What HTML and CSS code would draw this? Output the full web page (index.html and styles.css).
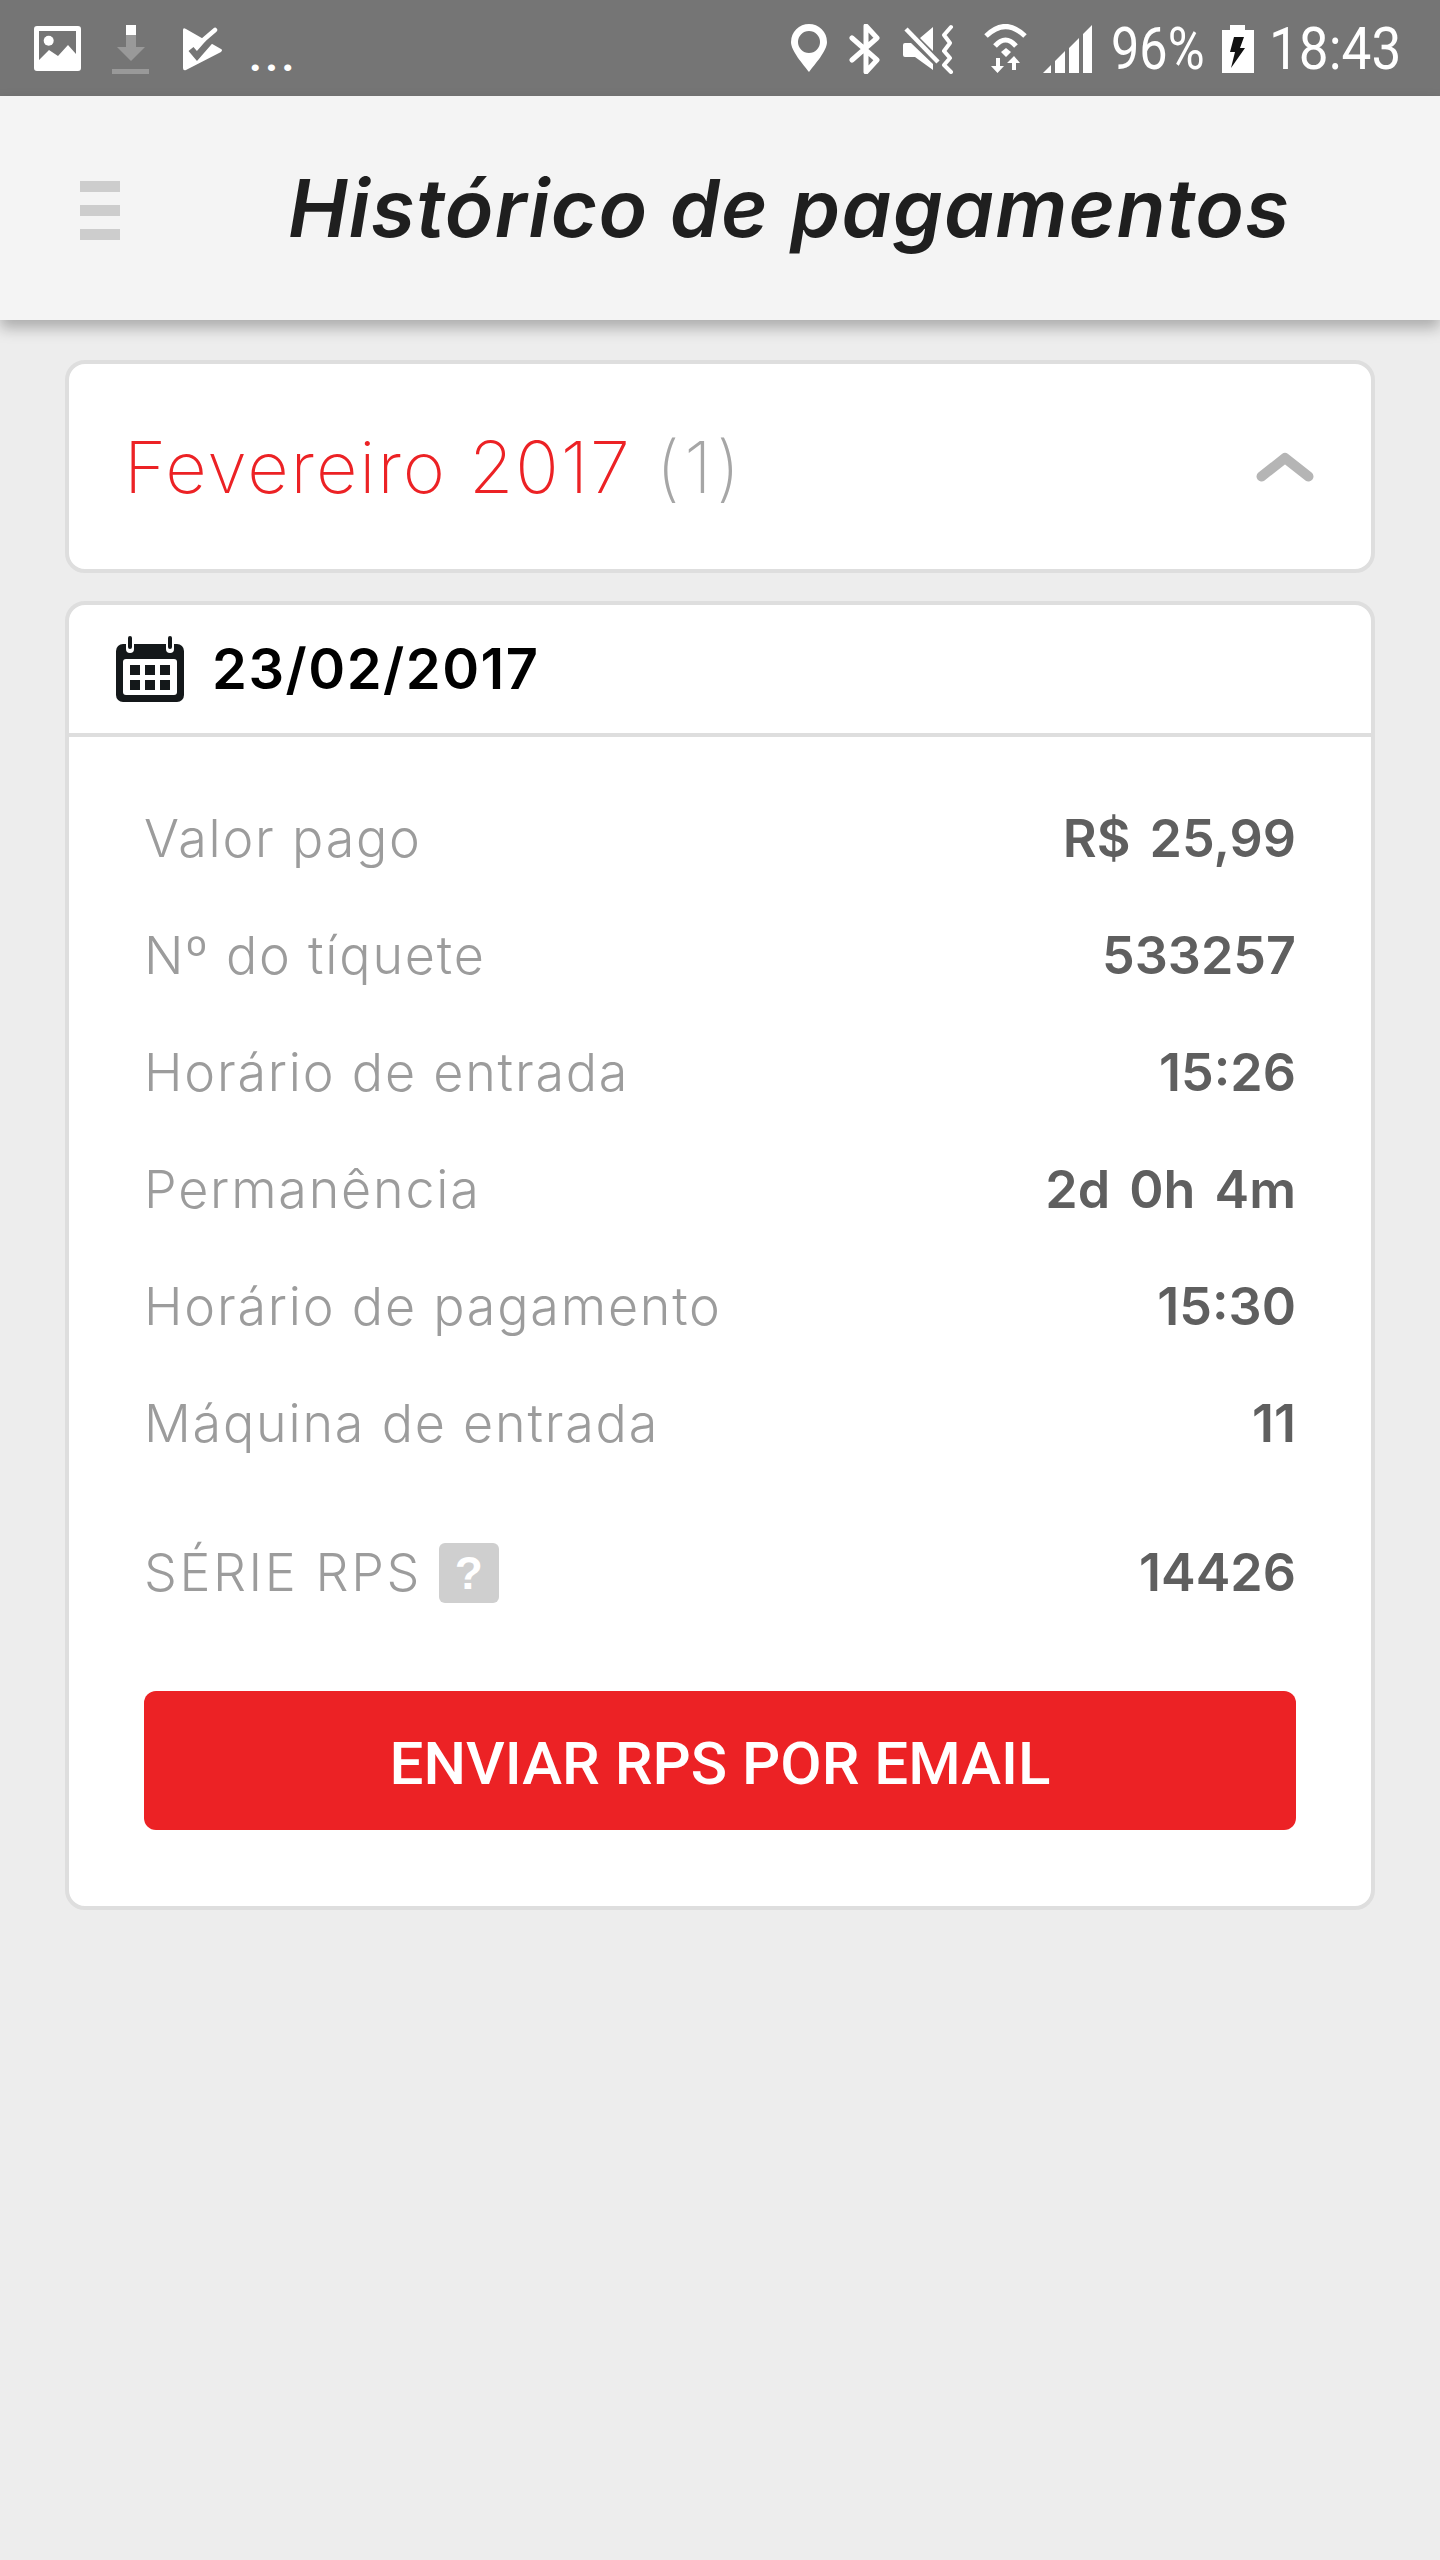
FILE: index.html
```html
<!DOCTYPE html>
<html lang="pt">
<head>
<meta charset="utf-8">
<title>Histórico de pagamentos</title>
<link rel="stylesheet" href="styles.css">
</head>
<body>
<div class="status">
  <div class="status-left">
    <svg class="i-image" width="47" height="45" viewBox="0 0 47 45"><path fill-rule="evenodd" fill="#fff" d="M3 0h41a3 3 0 0 1 3 3v39a3 3 0 0 1-3 3H3a3 3 0 0 1-3-3V3a3 3 0 0 1 3-3zM5 5v29l10-10 9 6 10-11 8 9V5z"/><circle cx="14.700" cy="14.700" r="5" fill="#fff"/></svg>
    <svg class="i-download" width="37" height="49" viewBox="0 0 37 49"><rect x="14" width="10" height="10" fill="#fff"/><path d="M14 10h10v12h9L19 36 5 22h9z" fill="#999"/><rect y="44" width="37" height="5" fill="#999"/></svg>
    <svg class="i-check" width="41" height="44" viewBox="0 0 41 44"><path fill="#fff" d="M0 3q0-3 3-1l35 20q2 1 0 3L3 43q-3 1-3-2z"/><path fill="none" stroke="#757575" stroke-width="6.500" d="M8 22l6 7 20-23"/><path fill="none" stroke="#fff" stroke-width="4.500" stroke-linecap="round" d="M18 15L32 3"/></svg>
    <span class="dots">...</span>
  </div>
  <div class="status-right">
    <svg class="i-pin" width="36" height="48" viewBox="0 0 36 48"><path fill-rule="evenodd" fill="#fff" d="M18 0a18 18 0 0 1 18 18c0 9-12 22-18 30C12 40 0 27 0 18A18 18 0 0 1 18 0zm0 7a11 11 0 1 0 0 22 11 11 0 0 0 0-22z"/></svg>
    <svg class="i-bt" width="31" height="50" viewBox="0 0 31 50"><path fill="none" stroke="#fff" stroke-width="5" stroke-linecap="round" stroke-linejoin="round" d="M3 14l25 22-11 12V2l11 12L3 36"/></svg>
    <svg class="i-mute" width="53" height="50" viewBox="0 0 53 50"><path fill="#fff" d="M18 14L31 3v24zM1 21q0-2 2-2h6l22 21v6L13 33H3q-2 0-2-2z"/><path stroke="#fff" stroke-width="4.500" d="M4 5l32 33"/><path fill="none" stroke="#fff" stroke-width="4" stroke-linejoin="round" stroke-linecap="round" d="M49 3l-7 8 6 8-6 8 6 7-6 7 7 7"/></svg>
    <svg class="i-wifi" width="43" height="49" viewBox="0 0 43 49"><g fill="none" stroke="#fff" stroke-width="5"><path d="M2 12Q21.500-7 41 12"/><path d="M11 22Q21.500 10 32 22"/></g><path fill="#fff" d="M17 28l5-4 5 4-5 5zM12 34h4v8h4l-6.500 7L7 42h5zM30 32l6 7h-4v7h-4v-7h-5z"/></svg>
    <svg class="i-signal" width="49" height="48" viewBox="0 0 49 48"><path fill="#fff" d="M0 48l8-8v8zM12 36l10-10v22H12zM26 23l10-10v35H26zM40 9l9-9v48h-9z"/></svg>
    <span class="pct">96%</span>
    <svg class="i-batt" width="32" height="48" viewBox="0 0 32 48"><path fill="#fff" d="M8 0h15v5h9v43H0V5h8z"/><path fill="#111" d="M12 12h10l-4 11h5L9 43l4-16H8z"/></svg>
    <span class="clock">18:43</span>
  </div>
</div>
<header class="bar">
  <div class="burger"><i></i><i></i><i></i></div>
  <h1>Histórico de pagamentos</h1>
</header>
<main class="content">
  <section class="card month">
    <div class="month-name"><span class="red">Fevereiro 2017</span> <span class="count">(1)</span></div>
    <svg class="chevron" width="58" height="30" viewBox="0 0 58 30"><path fill="none" stroke="#b5b5b5" stroke-width="10" stroke-linecap="round" stroke-linejoin="round" d="M5.500 24.500L29 6l23.500 18.500"/></svg>
  </section>
  <section class="card detail">
    <div class="detail-head">
      <svg width="68" height="66" viewBox="0 0 68 66"><rect y="8" width="68" height="58" rx="7" fill="#14181a"/><g fill="#fff"><rect x="10" y="0" width="8" height="17" rx="4"/><rect x="50" y="0" width="8" height="17" rx="4"/></g><g fill="#14181a"><rect x="12" y="0" width="4" height="13" rx="2"/><rect x="52" y="0" width="4" height="13" rx="2"/></g><rect x="7" y="23" width="54" height="36" rx="3" fill="#fff"/><g fill="#14181a"><rect x="14" y="29" width="10" height="10"/><rect x="29" y="29" width="10" height="10"/><rect x="44" y="29" width="10" height="10"/><rect x="14" y="44" width="10" height="10"/><rect x="29" y="44" width="10" height="10"/><rect x="44" y="44" width="10" height="10"/></g></svg>
      <span class="date">23/02/2017</span>
    </div>
    <div class="detail-body">
      <dl class="rows">
        <div class="row"><dt>Valor pago</dt><dd>R$ 25,99</dd></div>
        <div class="row"><dt>Nº do tíquete</dt><dd>533257</dd></div>
        <div class="row"><dt>Horário de entrada</dt><dd>15:26</dd></div>
        <div class="row"><dt>Permanência</dt><dd>2d 0h 4m</dd></div>
        <div class="row"><dt>Horário de pagamento</dt><dd>15:30</dd></div>
        <div class="row"><dt>Máquina de entrada</dt><dd>11</dd></div>
        <div class="row serie"><dt>SÉRIE RPS <span class="help">?</span></dt><dd>14426</dd></div>
      </dl>
      <button class="send">ENVIAR RPS POR EMAIL</button>
    </div>
  </section>
</main>
</body>
</html>
```
FILE: styles.css
```css
* { box-sizing: border-box; }
html, body { margin: 0; padding: 0; }
body { width: 1440px; height: 2560px; background: #ededed; font-family: Inter, "Liberation Sans", sans-serif; overflow: hidden; }
svg { display: block; flex: none; }

.status { height: 96px; background: #757575; display: flex; justify-content: space-between; align-items: flex-start; color: #fff; padding: 24px 0 0 34px; }
.status-left { display: flex; align-items: flex-start; }
.i-image { margin: 2px 0 0; }
.i-download { margin: 1px 0 0 31px; }
.i-check { margin: 3px 0 0 34px; }
.dots { font-family: Roboto, sans-serif; font-weight: 700; font-size: 44px; line-height: 48px; margin: 8px 0 0 25px; letter-spacing: 3.5px; }
.status-right { display: flex; align-items: flex-start; width: 650px; padding-left: 1px; }
.i-bt { margin-left: 22px; }
.i-mute { margin-left: 22px; }
.i-wifi { margin-left: 29px; }
.i-signal { margin: 1px 0 0 16px; }
.pct, .clock { font-family: Roboto, sans-serif; font-weight: 400; font-size: 60px; line-height: 50px; transform-origin: left top; white-space: nowrap; display: block; }
.pct { width: 94px; margin: 0 0 0 19px; transform: scaleX(.84); }
.i-batt { margin: 1px 0 0 17px; }
.clock { width: 129px; margin-left: 15px; transform: scaleX(.885); }

.bar { height: 224px; background: #f4f4f4; display: flex; align-items: center; box-shadow: 0 8px 14px rgba(0,0,0,.28); position: relative; padding-left: 80px; }
.burger { width: 40px; display: flex; flex-direction: column; gap: 13px; margin-top: 5px; }
.burger i { display: block; height: 11px; background: #cdcdcd; }
h1 { margin: 0 0 0 168px; font-family: Inter, sans-serif; font-style: italic; font-weight: 600; font-size: 80px; line-height: 100px; letter-spacing: 1.2px; color: #1f1f1f; white-space: nowrap; }

.content { padding: 40px 65px 0; display: flex; flex-direction: column; gap: 28px; }
.card { background: #fff; border: 4px solid #dedede; border-radius: 20px; }
.month { height: 213px; display: flex; align-items: center; justify-content: space-between; padding: 0 57px 0 55px; }
.month-name { font-size: 72px; font-weight: 200; line-height: 80px; letter-spacing: 1.9px; }
.red { color: #ec2225; }
.count { color: #a6a6a6; letter-spacing: 4.5px; margin-left: 2px; }

.detail { height: 1309px; }
.detail-head { height: 132px; border-bottom: 4px solid #dedede; display: flex; align-items: center; padding-left: 47px; gap: 28px; }
.date { font-size: 56px; font-weight: 600; color: #000; letter-spacing: 1.5px; }
.detail-body { padding: 43px 75px 0 75px; }
.rows { margin: 0; }
.row { height: 117px; display: flex; align-items: center; justify-content: space-between; }
.serie { margin-top: 32px; }
.serie dt { letter-spacing: 2.6px; }
dt { font-size: 52px; font-weight: 300; color: #9c9c9c; letter-spacing: 1.8px; display: flex; align-items: center; gap: 17px; }
dd { margin: 0; font-size: 52px; font-weight: 600; color: #5f5f5f; word-spacing: 6px; }
.help { width: 60px; height: 60px; background: #cfcfcf; color: #fff; border-radius: 6px; letter-spacing: 0; font: 700 46px/60px "Liberation Sans", sans-serif; text-align: center; }
.send { display: block; width: 1152px; height: 139px; margin: 60px 0 0; border: 0; border-radius: 12px; background: #ec2225; color: #fff; font-family: Roboto, sans-serif; font-weight: 500; font-size: 60px; padding: 5px 0 0; }
```
